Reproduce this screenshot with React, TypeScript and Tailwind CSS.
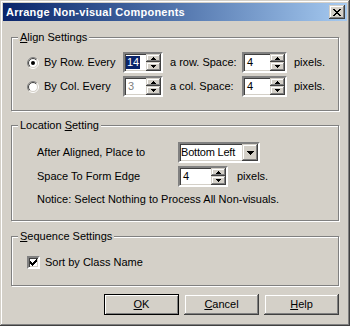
import React from 'react';

const sunken =
    'border-2 border-t-[#808080] border-l-[#808080] border-r-white border-b-white shadow-[inset_1px_1px_0_#404040,inset_-1px_-1px_0_#d4d0c8] bg-white';
const raised =
    'bg-[#d4d0c8] shadow-[inset_-1px_-1px_0_#404040,inset_1px_1px_0_#d4d0c8,inset_-2px_-2px_0_#808080,inset_2px_2px_0_#ffffff]';

const Arrow: React.FC<{ up?: boolean }> = ({ up }) => (
    <svg width="5" height="3" viewBox="0 0 5 3" shapeRendering="crispEdges">
        {up ? <path d="M2 0h1v1h1v1h1v1H0V2h1V1h1z" fill="#000" /> : <path d="M0 0h5v1H4v1H3v1H2V2H1V1H0z" fill="#000" />}
    </svg>
);

const Spin: React.FC<{ value: string; w: string; selected?: boolean; disabled?: boolean }> = ({ value, w, selected, disabled }) => (
    <div className={`${sunken} ${w} h-[21px] flex items-stretch`}>
        <div className="flex-1 flex items-center pl-[1px]">
            {selected ? (
                <span className="bg-[#0a246a] text-white px-[1px] leading-[13px]">{value}</span>
            ) : (
                <span className={`px-[2px] ${disabled ? 'text-[#808080]' : 'text-black'}`}>{value}</span>
            )}
        </div>
        <div className="w-[15px] flex flex-col">
            <div className={`${raised} h-[8px] flex items-center justify-center`}>
                <Arrow up />
            </div>
            <div className={`${raised} flex-1 flex items-center justify-center`}>
                <Arrow />
            </div>
        </div>
    </div>
);

const Radio: React.FC<{ checked?: boolean }> = ({ checked }) => (
    <svg width="12" height="12" viewBox="0 0 12 12">
        <defs>
            <linearGradient id="ro" x1="0" y1="0" x2="1" y2="1">
                <stop offset="0.5" stopColor="#808080" />
                <stop offset="0.5" stopColor="#ffffff" />
            </linearGradient>
            <linearGradient id="ri" x1="0" y1="0" x2="1" y2="1">
                <stop offset="0.5" stopColor="#404040" />
                <stop offset="0.5" stopColor="#d4d0c8" />
            </linearGradient>
        </defs>
        <circle cx="6" cy="6" r="5.5" fill="none" stroke="url(#ro)" strokeWidth="1" />
        <circle cx="6" cy="6" r="4.5" fill="#fff" stroke="url(#ri)" strokeWidth="1" />
        {checked && <circle cx="6" cy="6" r="2" fill="#000" />}
    </svg>
);

const Group: React.FC<{ title: React.ReactNode; className: string; children: React.ReactNode }> = ({ title, className, children }) => (
    <div className={`relative w-[328px] border border-[#808080] shadow-[inset_1px_1px_0_#fff,1px_1px_0_#fff] ${className}`}>
        <span className="absolute left-[6px] -top-[7px] px-[2px] bg-[#d4d0c8] leading-[13px]">{title}</span>
        {children}
    </div>
);

const Button: React.FC<{ children: React.ReactNode; primary?: boolean }> = ({ children, primary }) =>
    primary ? (
        <div className="w-[75px] h-[21px] border border-black bg-[#d4d0c8] shadow-[inset_1px_1px_0_#fff,inset_-1px_-1px_0_#808080] flex items-center justify-center">
            {children}
        </div>
    ) : (
        <div className={`${raised} w-[75px] h-[21px] flex items-center justify-center`}>{children}</div>
    );

const App: React.FC = () => {
    return (
        <div className="w-[350px] h-[326px] bg-[#d4d0c8] p-[3px] font-['Liberation_Sans',Arial,sans-serif] text-[11px] leading-[13px] text-black shadow-[inset_-1px_-1px_0_#404040,inset_1px_1px_0_#d4d0c8,inset_-2px_-2px_0_#808080,inset_2px_2px_0_#ffffff]">
            {/* Title bar */}
            <div className="h-[18px] bg-gradient-to-r from-[#0a246a] to-[#a6caf0] flex items-center justify-between pl-[3px] pr-[2px]">
                <span className="text-white font-bold tracking-[0.25px]">Arrange Non-visual Components</span>
                <div className={`${raised} w-[16px] h-[14px] flex items-center justify-center`}>
                    <svg width="8" height="7" viewBox="0 0 8 7" shapeRendering="crispEdges">
                        <path d="M0 0h2v1h1v1h2V1h1V0h2v1H7v1H6v1H5v1h1v1h1v1h1v1H6V6H5V5H3v1H2v1H0V6h1V5h1V4h1V3H2V2H1V1H0z" fill="#000" />
                    </svg>
                </div>
            </div>

            <div className="pl-[8px]">
                {/* Align Settings */}
                <Group title={<><u>A</u>lign Settings</>} className="mt-[16px] h-[74px] pt-[14px] pl-[15px]">
                    <div className="flex flex-col gap-[3px]">
                        <div className="flex items-center h-[21px]">
                            <div className="w-[96px] flex items-center gap-[5px]">
                                <Radio checked />
                                <span>By Row. Every</span>
                            </div>
                            <Spin value="14" w="w-[40px]" selected />
                            <span className="ml-[7px] w-[72px]">a row. Space:</span>
                            <Spin value="4" w="w-[45px]" />
                            <span className="ml-[7px]">pixels.</span>
                        </div>
                        <div className="flex items-center h-[21px]">
                            <div className="w-[96px] flex items-center gap-[5px]">
                                <Radio />
                                <span>By Col. Every</span>
                            </div>
                            <Spin value="3" w="w-[40px]" disabled />
                            <span className="ml-[7px] w-[72px]">a col. Space:</span>
                            <Spin value="4" w="w-[45px]" />
                            <span className="ml-[7px]">pixels.</span>
                        </div>
                    </div>
                </Group>

                {/* Location Setting */}
                <Group title={<>Location <u>S</u>etting</>} className="mt-[14px] h-[96px] pt-[16px] pl-[25px]">
                    <div className="flex items-center h-[21px]">
                        <span className="w-[141px]">After Aligned, Place to</span>
                        <div className={`${sunken} w-[82px] h-[21px] flex items-stretch`}>
                            <span className="flex-1 flex items-center pl-[1px] tracking-[-0.2px] whitespace-nowrap">Bottom Left</span>
                            <div className={`${raised} w-[16px] flex items-center justify-center`}>
                                <svg width="7" height="4" viewBox="0 0 7 4" shapeRendering="crispEdges">
                                    <path d="M0 0h7v1H6v1H5v1H4v1H3V3H2V2H1V1H0z" fill="#000" />
                                </svg>
                            </div>
                        </div>
                    </div>
                    <div className="flex items-center h-[21px] mt-[3px]">
                        <span className="w-[141px]">Space To Form Edge</span>
                        <Spin value="4" w="w-[50px]" />
                        <span className="ml-[9px]">pixels.</span>
                    </div>
                    <div className="mt-[6px]">Notice: Select Nothing to Process All Non-visuals.</div>
                </Group>

                {/* Sequence Settings */}
                <Group title={<><u>S</u>equence Settings</>} className="mt-[15px] h-[50px] pt-[19px] pl-[15px]">
                    <div className="flex items-center gap-[5px]">
                        <div className={`${sunken} w-[13px] h-[13px] flex items-center justify-center`}>
                            <svg width="7" height="7" viewBox="0 0 7 7" shapeRendering="crispEdges">
                                <path d="M6 0h1v3H6v1H5v1H4v1H3v1H2V6H1V5H0V2h1v1h1v1h1V3h1V2h1V1h1z" fill="#000" />
                            </svg>
                        </div>
                        <span>Sort by Class Name</span>
                    </div>
                </Group>

                {/* Buttons */}
                <div className="mt-[8px] w-[328px] flex justify-end gap-[5px]">
                    <Button primary><span><u>O</u>K</span></Button>
                    <Button><span><u>C</u>ancel</span></Button>
                    <Button><span><u>H</u>elp</span></Button>
                </div>
            </div>
        </div>
    );
};

export default App;
